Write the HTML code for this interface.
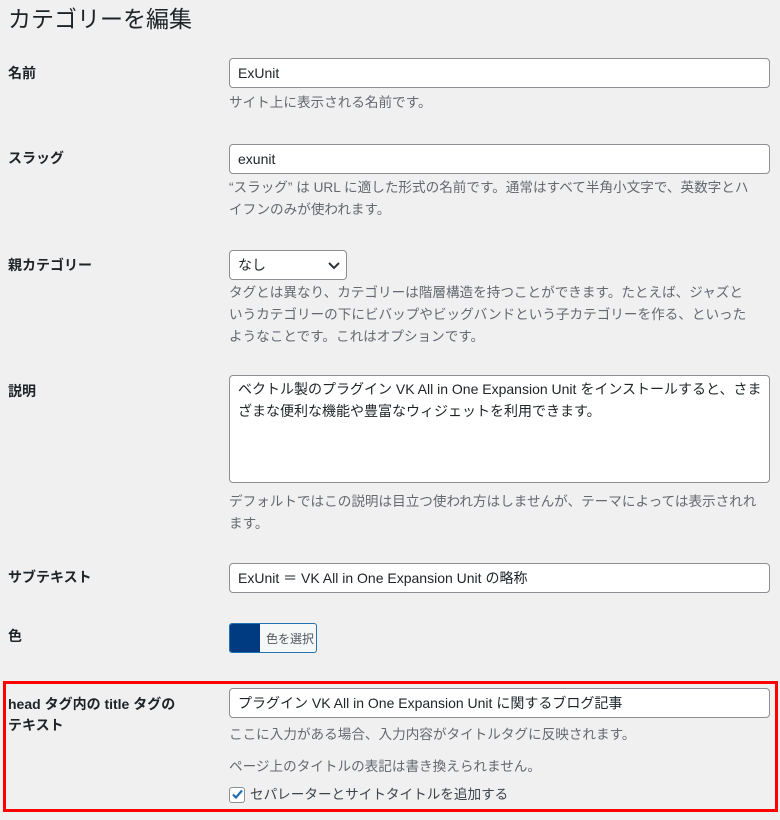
<!DOCTYPE html>
<html><head><meta charset="utf-8"><style>
*{box-sizing:border-box;margin:0;padding:0}
body{width:780px;height:820px;background:#f0f0f1;font-family:"Liberation Sans","Noto Sans CJK JP",sans-serif;color:#1d2327;position:relative;overflow:hidden;font-size:14px}
.a{position:absolute}
h1{position:absolute;left:8px;top:3px;font-size:23px;font-weight:400;line-height:32px}
.l{position:absolute;left:8px;font-weight:700;font-size:14px;line-height:20px}
.in{position:absolute;left:229px;width:541px;height:30px;background:#fff;border:1px solid #8c8f94;border-radius:4px;padding:0 8px;line-height:28px;font-size:14px;white-space:nowrap}
.d{position:absolute;left:229px;width:560px;color:#646970;font-size:13.6px;line-height:22px;white-space:nowrap}
</style></head><body>
<h1>カテゴリーを編集</h1>
<div class="l" style="top:63px">名前</div>
<div class="in" style="top:58px">ExUnit</div>
<div class="d" style="top:92px">サイト上に表示される名前です。</div>
<div class="l" style="top:148px">スラッグ</div>
<div class="in" style="top:144px">exunit</div>
<div class="d" style="top:177px">“スラッグ” は URL に適した形式の名前です。通常はすべて半角小文字で、英数字とハ<br>イフンのみが使われます。</div>
<div class="l" style="top:255px">親カテゴリー</div>
<div class="in" style="top:250px;width:118px">なし
<svg class="a" style="left:97px;top:10px" width="14" height="9" viewBox="0 0 14 9"><path d="M2 2l5 5 5-5" fill="none" stroke="#2c3338" stroke-width="2"/></svg></div>
<div class="d" style="top:282px">タグとは異なり、カテゴリーは階層構造を持つことができます。たとえば、ジャズと<br>いうカテゴリーの下にビバップやビッグバンドという子カテゴリーを作る、といった<br>ようなことです。これはオプションです。</div>
<div class="l" style="top:381px">説明</div>
<div class="in" style="top:375px;height:108px;line-height:22px;padding:2px 8px">ベクトル製のプラグイン VK All in One Expansion Unit をインストールすると、さま<br>ざまな便利な機能や豊富なウィジェットを利用できます。</div>
<div class="d" style="top:491px">デフォルトではこの説明は目立つ使われ方はしませんが、テーマによっては表示されれ<br>ます。</div>
<div class="l" style="top:567px">サブテキスト</div>
<div class="in" style="top:563px">ExUnit ＝ VK All in One Expansion Unit の略称</div>
<div class="l" style="top:626px">色</div>
<div class="a" style="left:229px;top:623px;width:88px;height:30px;border:1px solid #2271b1;border-radius:3px;background:#f6f7f7;overflow:hidden">
<div class="a" style="left:0;top:0;width:30px;height:28px;background:#003a80"></div>
<div class="a" style="left:36px;top:6px;font-size:12px;color:#50575e">色を選択</div></div>
<div class="a" style="left:3px;top:681px;width:775px;height:131px;border:3px solid #f00"></div>
<div class="l" style="top:694px;line-height:21px">head タグ内の title タグの<br>テキスト</div>
<div class="in" style="top:688px">プラグイン VK All in One Expansion Unit に関するブログ記事</div>
<div class="d" style="top:724px">ここに入力がある場合、入力内容がタイトルタグに反映されます。</div>
<div class="d" style="top:756px">ページ上のタイトルの表記は書き換えられません。</div>
<div class="a" style="left:229px;top:787px;width:16px;height:16px;border:1px solid #8c8f94;border-radius:3px;background:#fff">
<svg class="a" style="left:1px;top:0" width="13" height="13" viewBox="0 0 13 13"><path d="M2 6.5l3 3 6-7" fill="none" stroke="#2271b1" stroke-width="2.2"/></svg></div>
<div class="d" style="left:250px;top:784px;color:#3c434a">セパレーターとサイトタイトルを追加する</div>
</body></html>
